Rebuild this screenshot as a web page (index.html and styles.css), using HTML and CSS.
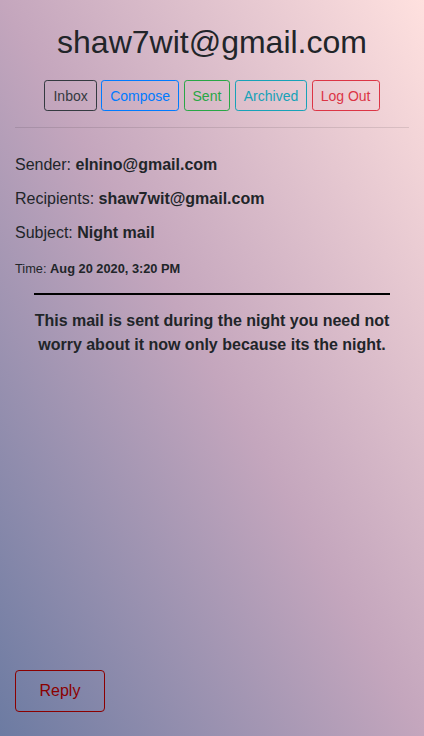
FILE: index.html
```html
<!DOCTYPE html>
<html lang="en">
<head>
<meta charset="utf-8">
<title>Mail</title>
<link rel="stylesheet" href="styles.css">
</head>
<body>
<div class="page">
  <main class="container">
    <h1 class="title">shaw7wit@gmail.com</h1>
    <nav class="nav">
      <button class="btn btn-dark">Inbox</button>
      <button class="btn btn-primary">Compose</button>
      <button class="btn btn-success">Sent</button>
      <button class="btn btn-info">Archived</button>
      <button class="btn btn-danger">Log Out</button>
    </nav>
    <hr class="divider">
    <section class="details">
      <div class="row">Sender: <b>elnino@gmail.com</b></div>
      <div class="row">Recipients: <b>shaw7wit@gmail.com</b></div>
      <div class="row">Subject: <b>Night mail</b></div>
      <div class="row row-time"><small class="small">Time: <b>Aug 20 2020, 3:20 PM</b></small></div>
    </section>
    <hr class="rule">
    <p class="body-text">This mail is sent during the night you need not worry about it now only because its the night.</p>
  </main>
  <footer class="footer">
    <button class="reply">Reply</button>
  </footer>
</div>
</body>
</html>
```

FILE: styles.css
```css
html, body {
  margin: 0;
  padding: 0;
}

body {
  font-family: "Liberation Sans", Arial, sans-serif;
  color: #212529;
  font-size: 16px;
  line-height: 24px;
  background: linear-gradient(to top right, #6c7ba2 0%, #c4a6bd 50%, #ffe1df 100%);
  min-height: 100vh;
}

.page {
  display: flex;
  flex-direction: column;
  min-height: 100vh;
}

.container {
  flex: 1;
  padding: 0 15px;
}

.title {
  margin: 23px 0 19px;
  font-size: 32px;
  line-height: 38px;
  font-weight: 400;
  text-align: center;
  color: #212529;
}

.nav {
  display: flex;
  justify-content: center;
  gap: 4.45px;
}

.btn {
  font-family: inherit;
  font-size: 14px;
  line-height: 21px;
  padding: 5px 8px 3px;
  border: 1px solid;
  border-radius: 3.2px;
  background: transparent;
  cursor: pointer;
}

.btn-dark { color: #343a40; border-color: #343a40; }
.btn-primary { color: #007bff; border-color: #007bff; }
.btn-success { color: #28a745; border-color: #28a745; }
.btn-info { color: #17a2b8; border-color: #17a2b8; }
.btn-danger { color: #dc3545; border-color: #dc3545; }

.divider {
  margin: 16px 0;
  border: 0;
  border-top: 1px solid rgba(0, 0, 0, 0.1);
}

.details {
  padding-top: 9px;
}

.row {
  margin: 0 0 10px;
  line-height: 24px;
}

.row-time {
  margin-top: 11px;
  margin-bottom: 0;
}

.small {
  font-size: 12.8px;
}

.rule {
  margin: 12px 19px 0;
  border: 0;
  border-top: 2px solid #000;
  height: 0;
}

.body-text {
  margin: 14px 0 0;
  text-align: center;
  font-weight: 700;
  line-height: 24px;
}

.footer {
  padding: 0 15px 24px;
}

.reply {
  font-family: inherit;
  font-size: 16px;
  line-height: 24px;
  padding: 8px 23.5px;
  color: #8b0000;
  background: transparent;
  border: 1px solid #8b0000;
  border-radius: 4px;
  cursor: pointer;
}
```
